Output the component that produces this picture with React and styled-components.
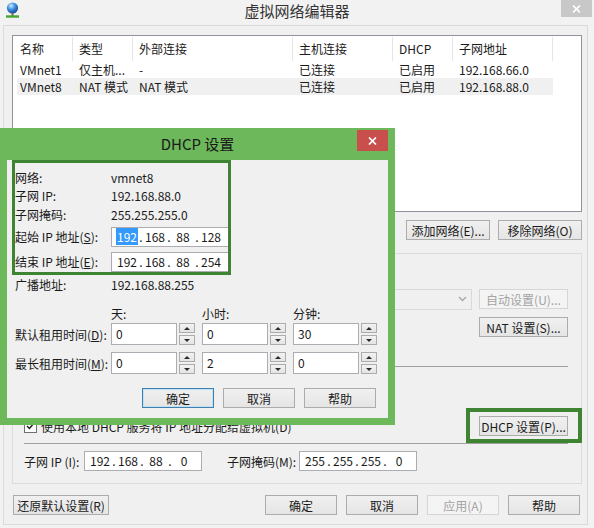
import React from "react";
import styled, { createGlobalStyle } from "styled-components";

const GlobalStyle = createGlobalStyle`
  html, body { margin: 0; padding: 0; }
  body {
    background: #f0f0f0;
    font-family: "Noto Sans CJK SC", "Liberation Sans", sans-serif;
    font-size: 12px;
    color: #1a1a1a;
  }
`;

// ---- window chrome ----
const Win = styled.div`
  position: relative;
  width: 594px;
  height: 528px;
  background: #f2f2f2;
  overflow: hidden;
`;

const TitleBar = styled.div`
  height: ${p => p.$h}px;
  display: grid;
  grid-template-columns: 1fr auto 1fr;
  align-items: start;
  flex: none;
`;

const TitleIcon = styled.div`
  padding: 2px 0 0 5px;
  line-height: 0;
`;

const TitleText = styled.div`
  font-size: 15px;
  line-height: ${p => p.$h}px;
  color: ${p => p.$color || "#333"};
`;

const CloseBtn = styled.div`
  justify-self: end;
  width: 31px;
  height: ${p => p.$h}px;
  margin: ${p => p.$top}px ${p => p.$right}px 0 0;
  background: ${p => (p.$red ? "#c94f4c" : "#c8c8c8")};
  display: flex;
  align-items: center;
  justify-content: center;
`;

const Client = styled.div`
  margin: 0 6px 0 3px;
  height: 500px;
  box-sizing: border-box;
  border: 1px solid #dadada;
  background: #f0f0f0;
  padding: 9px 5px 0 8px;
  display: flex;
  flex-direction: column;
`;

// ---- list view ----
const ListView = styled.div`
  height: 177px;
  box-sizing: border-box;
  border: 1px solid #8f939b;
  background: #fff;
  padding: 1px 4px;
`;

const ListRow = styled.div`
  display: flex;
  height: ${p => (p.$header ? 24 : 17)}px;
  align-items: center;
  background: ${p => (p.$selected ? "#f0f0f0" : "transparent")};
  width: 536px;
`;

const Cell = styled.div`
  width: ${p => p.$w}px;
  height: 100%;
  box-sizing: border-box;
  padding-left: ${p => (p.$first ? 3 : 6)}px;
  display: flex;
  align-items: center;
  white-space: nowrap;
  overflow: hidden;
  border-right: 1px solid ${p => (p.$header ? "#e5e5e5" : "transparent")};
  line-height: 16px;
`;

// ---- buttons / inputs ----
const Btn = styled.button`
  width: ${p => p.$w}px;
  height: 20px;
  box-sizing: border-box;
  padding: 0;
  flex: none;
  font: inherit;
  font-size: 12px;
  line-height: 17px;
  color: ${p => (p.disabled ? "#a3a3a3" : "#1a1a1a")};
  border: 1px solid ${p => (p.$default ? "#3c7fb1" : p.disabled ? "#d5d5d5" : "#acacac")};
  background: ${p => (p.disabled ? "#f4f4f4" : "linear-gradient(#f0f0f0, #e5e5e5)")};
  box-shadow: ${p => (p.$default ? "inset 0 0 0 1px #c4e0f5" : "none")};
`;

const IpBox = styled.div`
  width: ${p => p.$w}px;
  height: 20px;
  box-sizing: border-box;
  flex: none;
  border: 1px solid #abadb3;
  background: #fff;
  display: flex;
  align-items: center;
  padding-left: 3px;
`;

const IpPart = styled.span`
  width: 24px;
  flex: none;
  text-align: center;
  line-height: 14px;
`;

const IpDot = styled.span`
  width: 4px;
  flex: none;
  text-align: center;
  line-height: 14px;
`;

const Selected = styled.span`
  background: #3399ff;
  color: #fff;
  padding: 0 1px;
`;

const IpField = ({ parts, w, sel }) => (
  <IpBox $w={w}>
    {parts.map((p, i) => (
      <React.Fragment key={i}>
        {i > 0 && <IpDot>.</IpDot>}
        <IpPart>{sel === i ? <Selected>{p}</Selected> : p}</IpPart>
      </React.Fragment>
    ))}
  </IpBox>
);

// ---- main group ----
const ButtonRow = styled.div`
  display: flex;
  justify-content: flex-end;
  gap: 8px;
  margin-top: 8px;
`;

const Group = styled.div`
  position: relative;
  margin-top: 13px;
  height: 231px;
  box-sizing: border-box;
  border: 1px solid #dcdcdc;
  padding: 7px 13px 12px 11px;
  display: flex;
  flex-direction: column;
`;

const Legend = styled.span`
  position: absolute;
  top: -9px;
  left: 8px;
  padding: 0 3px;
  background: #f0f0f0;
  line-height: 16px;
`;

const Row = styled.div`
  display: flex;
  align-items: center;
  height: ${p => p.$h}px;
  margin-top: ${p => p.$mt || 0}px;
  padding-left: ${p => p.$indent || 0}px;
  white-space: nowrap;
  flex: none;
`;

const Spacer = styled.div`
  flex: 1;
`;

const Separator = styled.div`
  height: 1px;
  background: #a0a0a0;
  margin-top: ${p => p.$mt}px;
  flex: none;
`;

const Radio = styled.span`
  width: 13px;
  height: 13px;
  box-sizing: border-box;
  border: 1px solid #707070;
  border-radius: 50%;
  background: #fff;
  margin-right: 4px;
  display: inline-flex;
  align-items: center;
  justify-content: center;
  flex: none;
  &::after {
    content: "";
    width: 5px;
    height: 5px;
    border-radius: 50%;
    background: ${p => (p.$on ? "#333" : "transparent")};
  }
`;

const Check = styled.span`
  width: 13px;
  height: 13px;
  box-sizing: border-box;
  border: 1px solid #707070;
  background: #fff;
  margin-right: 4px;
  display: inline-flex;
  align-items: center;
  justify-content: center;
  flex: none;
`;

const Combo = styled.div`
  flex: 1;
  height: 21px;
  box-sizing: border-box;
  border: 1px solid #d9d9d9;
  background: #f0f0f0;
  display: flex;
  align-items: center;
  justify-content: flex-end;
  padding-right: 4px;
  margin: 0 7px 0 8px;
`;

const Marked = styled.div`
  position: relative;
  flex: none;
  &::after {
    content: "";
    position: absolute;
    top: -8px;
    left: -13px;
    right: -14px;
    bottom: -7px;
    border: 4px solid #3e8433;
  }
`;

const FieldLabel = styled.span`
  width: ${p => p.$w}px;
  margin-left: ${p => p.$ml || 0}px;
  flex: none;
`;

const BottomBar = styled.div`
  display: flex;
  gap: 9px;
  margin: 11px 2px 0 1px;
  & > :nth-child(2) {
    margin-left: auto;
  }
`;

// ---- DHCP dialog ----
const Dialog = styled.div`
  position: absolute;
  left: 0;
  top: 128px;
  z-index: 2;
  width: 395px;
  height: 297px;
  box-sizing: border-box;
  background: #6cb85a;
  padding: 0 7px 7px;
  display: flex;
  flex-direction: column;
`;

const DialogBody = styled.div`
  flex: 1;
  background: #f0f0f0;
  display: flex;
  flex-direction: column;
`;

const InfoBox = styled.div`
  margin-left: 5px;
  width: 219px;
  box-sizing: border-box;
  border: 3px solid #3e8433;
  overflow: hidden;
  padding-top: 5px;
  display: grid;
  grid-template-columns: 96px minmax(0, 1fr);
  grid-template-rows: 18px 19px 18px 24px 25px;
  align-items: center;
  white-space: nowrap;
  & > .end {
    align-self: end;
  }
`;

const InfoRow = styled.div`
  height: 18px;
  padding-left: 8px;
  display: grid;
  grid-template-columns: 96px auto;
  align-items: center;
`;

const LeaseGrid = styled.div`
  margin-top: ${p => p.$mt}px;
  padding-left: 8px;
  display: grid;
  grid-template-columns: 89px 84px 84px 84px;
  grid-auto-rows: ${p => p.$row}px;
  column-gap: 7px;
  row-gap: 7px;
  align-items: center;
  white-space: nowrap;
`;

const SpinWrap = styled.div`
  display: flex;
  gap: 2px;
  height: 22px;
`;

const SpinInput = styled.div`
  width: 66px;
  box-sizing: border-box;
  border: 1px solid #abadb3;
  background: #fff;
  padding: 0 0 2px 4px;
  display: flex;
  align-items: center;
`;

const SpinBtns = styled.div`
  width: 16px;
  display: flex;
  flex-direction: column;
  gap: 2px;
`;

const SpinBtn = styled.div`
  flex: 1;
  box-sizing: border-box;
  border: 1px solid #acacac;
  background: linear-gradient(#f2f2f2, #e4e4e4);
  display: flex;
  align-items: center;
  justify-content: center;
  &::after {
    content: "";
    border-left: 3px solid transparent;
    border-right: 3px solid transparent;
    ${p => (p.$down ? "border-top" : "border-bottom")}: 3px solid #2a2a2a;
  }
`;

const DialogButtons = styled.div`
  display: flex;
  justify-content: flex-end;
  gap: 9px;
  margin-top: 14px;
  padding-right: 12px;
`;

const Spinner = ({ value }) => (
  <SpinWrap>
    <SpinInput>{value}</SpinInput>
    <SpinBtns>
      <SpinBtn />
      <SpinBtn $down />
    </SpinBtns>
  </SpinWrap>
);

const CloseX = () => (
  <svg width="9" height="8" viewBox="0 0 9 8">
    <path d="M1 0.5 L8 7.5 M8 0.5 L1 7.5" stroke="#fff" strokeWidth="1.7" />
  </svg>
);

const AppIcon = () => (
  <svg width="15" height="16" viewBox="0 0 15 16">
    <defs>
      <radialGradient id="globe" cx="38%" cy="30%" r="75%">
        <stop offset="0" stopColor="#cfeaff" />
        <stop offset="0.45" stopColor="#3f92e2" />
        <stop offset="1" stopColor="#163f8f" />
      </radialGradient>
    </defs>
    <circle cx="7.5" cy="6" r="5.6" fill="url(#globe)" />
    <rect x="6.5" y="11" width="2" height="3" fill="#6b6b6b" />
    <rect x="1" y="13.3" width="13" height="2.4" fill="#46a62c" />
  </svg>
);

const CheckMark = () => (
  <svg width="9" height="8" viewBox="0 0 9 8">
    <path d="M1 4 L3.5 6.5 L8 1" stroke="#222" strokeWidth="1.5" fill="none" />
  </svg>
);

const Chevron = () => (
  <svg width="9" height="6" viewBox="0 0 9 6">
    <path d="M1 1 L4.5 4.5 L8 1" stroke="#a8a8a8" strokeWidth="1.4" fill="none" />
  </svg>
);

const columns = [
  { key: "name", title: "名称", w: 56 },
  { key: "type", title: "类型", w: 60 },
  { key: "ext", title: "外部连接", w: 160 },
  { key: "host", title: "主机连接", w: 100 },
  { key: "dhcp", title: "DHCP", w: 60 },
  { key: "subnet", title: "子网地址", w: 100 },
];

const nets = [
  { name: "VMnet1", type: "仅主机...", ext: "-", host: "已连接", dhcp: "已启用", subnet: "192.168.66.0" },
  { name: "VMnet8", type: "NAT 模式", ext: "NAT 模式", host: "已连接", dhcp: "已启用", subnet: "192.168.88.0", selected: true },
];

export default function App() {
  return (
    <>
      <GlobalStyle />
      <Win>
        <TitleBar $h={25}>
          <TitleIcon>
            <AppIcon />
          </TitleIcon>
          <TitleText $h={22}>虚拟网络编辑器</TitleText>
          <CloseBtn $h={17} $top={0} $right={2}>
            <CloseX />
          </CloseBtn>
        </TitleBar>

        <Client>
          <ListView>
            <ListRow $header>
              {columns.map((c, i) => (
                <Cell key={c.key} $w={c.w} $first={i === 0} $header>
                  {c.title}
                </Cell>
              ))}
            </ListRow>
            {nets.map(n => (
              <ListRow key={n.name} $selected={n.selected}>
                {columns.map((c, i) => (
                  <Cell key={c.key} $w={c.w} $first={i === 0}>
                    {n[c.key]}
                  </Cell>
                ))}
              </ListRow>
            ))}
          </ListView>

          <ButtonRow>
            <Btn $w={84}>添加网络(E)...</Btn>
            <Btn $w={84}>移除网络(O)</Btn>
          </ButtonRow>

          <Group>
            <Legend>VMnet 信息</Legend>
            <Row $h={20}>
              <Radio />
              桥接模式(将虚拟机直接连接到外部网络)(B)
            </Row>
            <Row $h={20} $mt={8} $indent={17}>
              已桥接至(G):
              <Combo>
                <Chevron />
              </Combo>
              <Btn $w={89} disabled>
                自动设置(U)...
              </Btn>
            </Row>
            <Row $h={20} $mt={8}>
              <Radio $on />
              NAT 模式(与虚拟机共享主机的 IP 地址)(N)
              <Spacer />
              <Btn $w={89}>NAT 设置(S)...</Btn>
            </Row>
            <Row $h={18} $mt={6}>
              <Radio />
              仅主机模式(在专用网络内连接虚拟机)(H)
            </Row>
            <Separator $mt={5} />
            <Row $h={16} $mt={8}>
              <Check>
                <CheckMark />
              </Check>
              将主机虚拟适配器连接到此网络(V)
            </Row>
            <Row $h={16} $mt={3} $indent={17}>
              主机虚拟适配器名称: VMware 网络适配器 VMnet8
            </Row>
            <Row $h={20} $mt={6}>
              <Check>
                <CheckMark />
              </Check>
              使用本地 DHCP 服务将 IP 地址分配给虚拟机(D)
              <Spacer />
              <Marked>
                <Btn $w={89}>DHCP 设置(P)...</Btn>
              </Marked>
            </Row>
            <Separator $mt={7} />
            <Row $h={20} $mt={7}>
              <FieldLabel $w={60}>子网 IP (I):</FieldLabel>
              <IpField w={118} parts={["192", "168", "88", "0"]} />
              <FieldLabel $w={72} $ml={25}>子网掩码(M):</FieldLabel>
              <IpField w={118} parts={["255", "255", "255", "0"]} />
            </Row>
          </Group>

          <BottomBar>
            <Btn $w={96}>还原默认设置(R)</Btn>
            <Btn $w={72}>确定</Btn>
            <Btn $w={72}>取消</Btn>
            <Btn $w={72} disabled>
              应用(A)
            </Btn>
            <Btn $w={72}>帮助</Btn>
          </BottomBar>
        </Client>

        <Dialog>
          <TitleBar $h={32}>
            <span />
            <TitleText $h={32} $color="#1a1a1a">DHCP 设置</TitleText>
            <CloseBtn $h={21} $top={2} $right={0} $red>
              <CloseX />
            </CloseBtn>
          </TitleBar>
          <DialogBody>
            <InfoBox>
              <span>网络:</span>
              <span>vmnet8</span>
              <span>子网 IP:</span>
              <span>192.168.88.0</span>
              <span>子网掩码:</span>
              <span>255.255.255.0</span>
              <span className="end" style={{ lineHeight: "20px" }}>
                起始 IP 地址(<u>S</u>):
              </span>
              <div className="end">
                <IpField w={125} parts={["192", "168", "88", "128"]} sel={0} />
              </div>
              <span className="end" style={{ lineHeight: "20px" }}>
                结束 IP 地址(<u>E</u>):
              </span>
              <div className="end">
                <IpField w={125} parts={["192", "168", "88", "254"]} />
              </div>
            </InfoBox>
            <InfoRow>
              <span>广播地址:</span>
              <span>192.168.88.255</span>
            </InfoRow>
            <LeaseGrid $mt={11} $row={18}>
              <span />
              <span>天:</span>
              <span>小时:</span>
              <span>分钟:</span>
            </LeaseGrid>
            <LeaseGrid $mt={1} $row={22}>
              <span>默认租用时间(<u>D</u>):</span>
              <Spinner value="0" />
              <Spinner value="0" />
              <Spinner value="30" />
              <span>最长租用时间(<u>M</u>):</span>
              <Spinner value="0" />
              <Spinner value="2" />
              <Spinner value="0" />
            </LeaseGrid>
            <DialogButtons>
              <Btn $w={72} $default>确定</Btn>
              <Btn $w={72}>取消</Btn>
              <Btn $w={72}>帮助</Btn>
            </DialogButtons>
          </DialogBody>
        </Dialog>
      </Win>
    </>
  );
}
